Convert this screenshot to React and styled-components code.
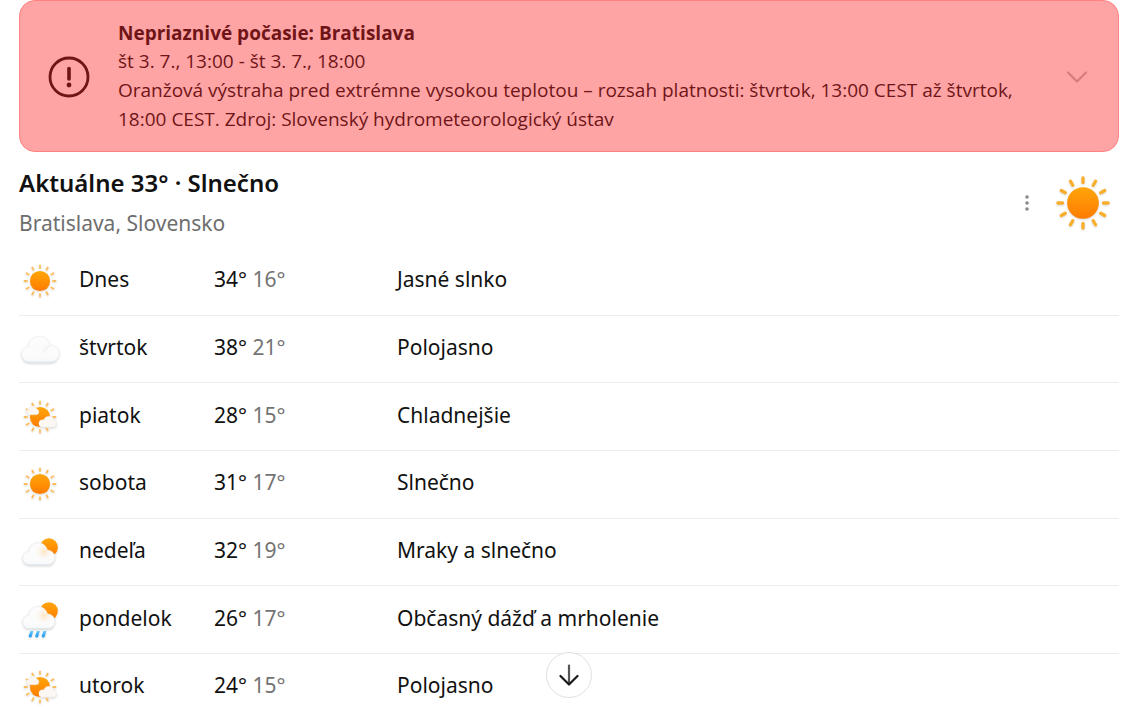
import React from "react";
import styled, { createGlobalStyle } from "styled-components";

const GlobalStyle = createGlobalStyle`
  *, *::before, *::after { box-sizing: border-box; }
  body {
    margin: 0;
    background: #ffffff;
    color: #111111;
    font-family: "Noto Sans", "Open Sans", sans-serif;
    font-size: 21px;
  }
`;

const Page = styled.main`
  padding: 0 10px 8px 19px;
`;

const Alert = styled.section`
  display: flex;
  align-items: center;
  padding: 18px 28px 17px;
  border: 1px solid #ff8182;
  border-radius: 16px;
  background: #ffa4a4;
  color: #6f1518;
  font-family: "Open Sans", "Noto Sans", sans-serif;
`;

const AlertIcon = styled.svg`
  flex: none;
  width: 42px;
  height: 42px;
  margin-right: 28px;
`;

const AlertBody = styled.div`
  flex: 1;
  min-width: 0;
  margin-right: 28px;
  font-size: 19px;
  line-height: 29px;
`;

const AlertTitle = styled.h2`
  margin: 0;
  font-size: 19px;
  line-height: 28px;
  font-weight: 700;
`;

const AlertText = styled.p`
  margin: 0;
`;

const IconButton = styled.button`
  display: flex;
  align-items: center;
  justify-content: center;
  flex: none;
  width: 26px;
  height: 32px;
  padding: 0;
  border: 0;
  background: none;
  color: ${(p) => p.$color};
  cursor: pointer;
`;

const Current = styled.header`
  display: flex;
  align-items: center;
  height: 96px;
  padding-top: 6px;
`;

const CurrentText = styled.div`
  flex: 1;
  min-width: 0;
`;

const CurrentTitle = styled.h1`
  margin: 0;
  font-size: 24px;
  line-height: 40px;
  font-weight: 600;
`;

const Place = styled.p`
  margin: 0;
  font-size: 21px;
  line-height: 40px;
  color: #6e6e6e;
`;

const CurrentIcon = styled.div`
  display: flex;
  padding: 0 3px 0 10px;
`;

const Drawing = styled.svg`
  display: block;
  overflow: visible;
  width: ${(p) => p.$size}px;
  height: ${(p) => p.$size}px;
  filter: drop-shadow(0 1px 1px rgba(0, 0, 0, 0.16));
`;

const Forecast = styled.div`
  position: relative;
`;

const Days = styled.table`
  width: 100%;
  height: 472px;
  border-spacing: 0;
  table-layout: fixed;
`;

const Day = styled.tr`
  &:not(:last-child) > * { border-bottom: 1px solid #ececec; }
`;

const Cell = styled.td`
  width: ${(p) => p.$width};
  padding: 0 0 4px;
  font-size: 21px;
  line-height: 28px;
  font-weight: 400;
  text-align: left;
  white-space: nowrap;
`;

const IconCell = styled(Cell)`
  padding: 0;
`;

const DayName = styled(Cell).attrs({ as: "th", scope: "row" })``;

const Low = styled.span`
  color: #737373;
`;

const ScrollDown = styled.button`
  position: absolute;
  bottom: 22px;
  left: calc(50% - 23px);
  display: flex;
  align-items: center;
  justify-content: center;
  width: 46px;
  height: 46px;
  padding: 0;
  border: 1px solid #e0e0e0;
  border-radius: 50%;
  background: #ffffff;
  color: #1a1a1a;
  cursor: pointer;
`;

const RAYS = Array.from({ length: 12 }, (_, i) => i * 30);
const CLOUD =
  "M10 32.5a7.6 7.6 0 0 1-7.6-7.4c0-4 2.9-7 6.600-7.500C10 12 14 8 19.200 8c5.300 0 9.200 3.400 10.500 8.200 4.800.1 8.300 3.700 8.300 8.200 0 4.600-3.400 8.100-8 8.100Z";

const HiddenSvg = styled.svg`
  position: absolute;
`;

const Gradients = () => (
  <HiddenSvg width="0" height="0" aria-hidden="true">
    <defs>
      <linearGradient id="sun" x1="0" y1="0" x2="0" y2="1">
        <stop offset="0" stopColor="#ffa60a" />
        <stop offset="1" stopColor="#ff7b00" />
      </linearGradient>
      <linearGradient id="cloud" x1="0" y1="0" x2="0" y2="1">
        <stop offset="0" stopColor="#fcfcfc" />
        <stop offset="0.8" stopColor="#fbfbfb" />
        <stop offset="1" stopColor="#f5f7f9" />
      </linearGradient>
      <radialGradient id="glow">
        <stop offset="0" stopColor="#ffdcb4" stopOpacity="0.8" />
        <stop offset="1" stopColor="#ffeedd" stopOpacity="0" />
      </radialGradient>
      <linearGradient id="rain" x1="0" y1="0" x2="0" y2="1">
        <stop offset="0" stopColor="#6cc7fb" />
        <stop offset="1" stopColor="#1598ef" />
      </linearGradient>
      <clipPath id="cloud-clip">
        <path d={CLOUD} />
      </clipPath>
    </defs>
  </HiddenSvg>
);

const SunShape = ({ ray, rayWidth, tip }) => (
  <>
    {RAYS.map((angle) => (
      <path
        key={angle}
        d={`M20 ${tip}V7.600`}
        transform={`rotate(${angle} 20 20)`}
        stroke={ray}
        strokeWidth={rayWidth}
        strokeLinecap="round"
      />
    ))}
    <circle cx="20" cy="20" r="9.600" fill="url(#sun)" />
  </>
);

const Sun = () => (
  <Drawing $size={42} viewBox="0 0 40 40" aria-hidden="true">
    <SunShape ray="#fbbd5c" rayWidth={1.7} tip={5.2} />
  </Drawing>
);

const BigSun = () => (
  <Drawing $size={66} viewBox="0 0 40 40" aria-hidden="true">
    <SunShape ray="#f9ae2c" rayWidth={2} tip={4.8} />
  </Drawing>
);

const Cloud = () => (
  <Drawing $size={42} viewBox="0 0 40 40" aria-hidden="true">
    <path d={CLOUD} fill="url(#cloud)" stroke="#efeff1" strokeWidth="0.600" />
    <path d="M29.700 16.200c-4 .3-6.400 3-7.700 7.800 2.500-1 5.500-3.500 7.700-7.800Z" fill="#f4f4f5" />
    <path d="M5 31.200c1.500 1 3 1.300 5 1.300h20c2 0 3.500-.4 5-1.300" fill="none" stroke="#e2e9ed" />
  </Drawing>
);

const SunWithClouds = () => (
  <Drawing $size={42} viewBox="0 0 40 40" aria-hidden="true">
    <SunShape ray="#fbbd5c" rayWidth={1.7} tip={5.2} />
    <path
      d="M9.800 17.800a2.600 2.600 0 0 1 0-5.200c.6-2.100 1.700-3 3.500-3 1.900 0 3.100 1.100 3.500 2.800 1.300.2 2.200 1.200 2.200 2.600 0 1.700-1.200 2.800-2.800 2.800Z"
      fill="#fcf7f2"
      stroke="#f3e9e0"
      strokeWidth="0.400"
    />
    <path
      d="M22.500 29.800a3.600 3.600 0 0 1 0-7.200c.5 0 .8 0 1.100.2.900-2.400 2.600-3.500 4.900-3.500 2.800 0 4.700 1.900 5 4.300 1.400.4 2.200 1.500 2.200 2.900 0 2-1.400 3.300-3.400 3.300Z"
      fill="#fbf7f3"
      stroke="#f1e9e2"
      strokeWidth="0.400"
    />
  </Drawing>
);

const CloudSunShape = () => (
  <>
    <circle cx="28.500" cy="15.500" r="8.500" fill="url(#sun)" />
    <g transform="translate(1.500 4.300) scale(0.860)">
      <path d={CLOUD} fill="url(#cloud)" stroke="#e9eaec" strokeWidth="0.700" />
      <circle cx="26" cy="18" r="9" fill="url(#glow)" clipPath="url(#cloud-clip)" />
      <path d="M5 31.200c1.500 1 3 1.300 5 1.300h20c2 0 3.500-.4 5-1.300" fill="none" stroke="#dfe7ec" />
    </g>
  </>
);

const CloudSun = () => (
  <Drawing $size={42} viewBox="0 0 40 40" aria-hidden="true">
    <CloudSunShape />
  </Drawing>
);

const RainSun = () => (
  <Drawing $size={42} viewBox="0 0 40 40" aria-hidden="true">
    <g transform="translate(0 -4)">
      <CloudSunShape />
    </g>
    {[9, 15.2, 21.4].map((x) => (
      <path
        key={x}
        d={`M${x + 2} 30.500h2.600l-1.400 5a1.500 1.500 0 0 1-2.900-.8Z`}
        fill="url(#rain)"
      />
    ))}
  </Drawing>
);

const DAYS = [
  { name: "Dnes", high: 34, low: 16, text: "Jasné slnko", Icon: Sun },
  { name: "štvrtok", high: 38, low: 21, text: "Polojasno", Icon: Cloud },
  { name: "piatok", high: 28, low: 15, text: "Chladnejšie", Icon: SunWithClouds },
  { name: "sobota", high: 31, low: 17, text: "Slnečno", Icon: Sun },
  { name: "nedeľa", high: 32, low: 19, text: "Mraky a slnečno", Icon: CloudSun },
  { name: "pondelok", high: 26, low: 17, text: "Občasný dážď a mrholenie", Icon: RainSun },
  { name: "utorok", high: 24, low: 15, text: "Polojasno", Icon: SunWithClouds },
];

export default function App() {
  return (
    <Page>
      <GlobalStyle />
      <Gradients />
      <Alert role="alert">
        <AlertIcon viewBox="0 0 42 42" fill="none" stroke="currentColor" aria-hidden="true">
          <circle cx="21" cy="21" r="19" strokeWidth="2.800" />
          <path d="M21 12.500v10.500" strokeWidth="3.600" strokeLinecap="round" />
          <circle cx="21" cy="29" r="2.400" fill="currentColor" stroke="none" />
        </AlertIcon>
        <AlertBody>
          <AlertTitle>Nepriaznivé počasie: Bratislava</AlertTitle>
          <AlertText>št 3. 7., 13:00 - št 3. 7., 18:00</AlertText>
          <AlertText>
            Oranžová výstraha pred extrémne vysokou teplotou – rozsah platnosti: štvrtok, 13:00 CEST až
            štvrtok, 18:00 CEST. Zdroj: Slovenský hydrometeorologický ústav
          </AlertText>
        </AlertBody>
        <IconButton type="button" aria-label="Rozbaliť výstrahu" $color="#d97b7d">
          <svg width="22" height="12" viewBox="0 0 22 12" fill="none" aria-hidden="true">
            <path d="M2 1.500l9 9 9-9" stroke="currentColor" strokeWidth="2.200" strokeLinecap="round" strokeLinejoin="round" />
          </svg>
        </IconButton>
      </Alert>

      <Current>
        <CurrentText>
          <CurrentTitle>Aktuálne 33° · Slnečno</CurrentTitle>
          <Place>Bratislava, Slovensko</Place>
        </CurrentText>
        <IconButton type="button" aria-label="Viac možností" $color="#8a8a8a">
          <svg width="4" height="18" viewBox="0 0 4 18" fill="currentColor" aria-hidden="true">
            <circle cx="2" cy="3" r="1.800" />
            <circle cx="2" cy="9" r="1.800" />
            <circle cx="2" cy="15" r="1.800" />
          </svg>
        </IconButton>
        <CurrentIcon>
          <BigSun />
        </CurrentIcon>
      </Current>

      <Forecast>
        <Days>
          <tbody>
            {DAYS.map(({ name, high, low, text, Icon }) => (
              <Day key={name}>
                <IconCell $width="60px">
                  <Icon />
                </IconCell>
                <DayName $width="135px">{name}</DayName>
                <Cell $width="183px">
                  {high}° <Low>{low}°</Low>
                </Cell>
                <Cell $width="auto">{text}</Cell>
              </Day>
            ))}
          </tbody>
        </Days>
        <ScrollDown type="button" aria-label="Posunúť nadol">
          <svg width="22" height="22" viewBox="0 0 22 22" fill="none" stroke="currentColor" strokeWidth="2.200" strokeLinecap="round" strokeLinejoin="round" aria-hidden="true">
            <path d="M11 1.500v18.500" stroke="#555555" />
            <path d="M2.500 12l8.500 8.500 8.500-8.500" />
          </svg>
        </ScrollDown>
      </Forecast>
    </Page>
  );
}
